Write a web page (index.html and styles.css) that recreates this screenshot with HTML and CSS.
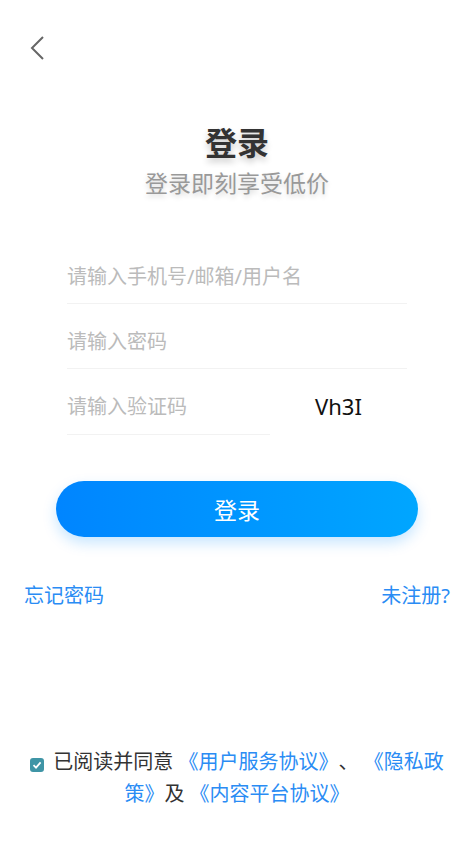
FILE: index.html
```html
<!DOCTYPE html>
<html lang="zh-CN">
<head>
    <meta charset="UTF-8">
    <meta name="viewport" content="width=device-width, initial-scale=1.0">
    <title>登录</title>
    <link rel="stylesheet" href="styles.css">
</head>
<body>

    <div class="page">
        <div class="top-bar">
            <svg class="back" width="16" height="26" viewBox="0 0 16 26">
                <polyline points="14,2 3,13 14,24" fill="none" stroke="#666" stroke-width="2"/>
            </svg>
        </div>

        <div class="heading">
            <h1>登录</h1>
            <p>登录即刻享受低价</p>
        </div>

        <div class="form">
            <div class="form-row">
                <input type="text" placeholder="请输入手机号/邮箱/用户名">
            </div>
            <div class="form-row">
                <input type="password" placeholder="请输入密码">
            </div>
            <div class="form-row captcha-row">
                <input type="text" placeholder="请输入验证码">
                <div class="captcha">Vh3I</div>
            </div>
        </div>

        <button class="login-btn">登录</button>

        <div class="links">
            <a href="#">忘记密码</a>
            <a href="#">未注册?</a>
        </div>

        <div class="agree">
            <span class="check">
                <svg width="10" height="10" viewBox="0 0 10 10">
                    <polyline points="1.5,5.2 4,7.6 8.6,2.4" fill="none" stroke="#fff" stroke-width="1.8"/>
                </svg>
            </span>已阅读并同意 <a href="#">《用户服务协议》</a>、 <a href="#">《隐私政策》</a>及 <a href="#">《内容平台协议》</a>
        </div>
    </div>

</body>
</html>
```

FILE: styles.css
```css
body {
    margin: 0;
    padding: 0;
    background: #fff;
    font-family: "Noto Sans", "Noto Sans CJK SC", sans-serif;
    text-spacing-trim: space-all;
}
.page {
    min-height: 100vh;
    display: flex;
    flex-direction: column;
}
.top-bar {
    height: 96px;
    padding: 35px 0 0 29px;
    box-sizing: border-box;
}
.back {
    display: block;
}
.heading {
    text-align: center;
    margin-top: 28px;
}
.heading h1 {
    margin: 0;
    font-size: 32px;
    line-height: 38px;
    font-weight: bold;
    color: #333;
    text-shadow: 0 4px 6px rgba(0, 0, 0, 0.2);
}
.heading p {
    margin: 6px 0 0;
    font-size: 23px;
    line-height: 30px;
    color: #999;
    text-shadow: 0 3px 5px rgba(0, 0, 0, 0.15);
}
.form {
    width: 340px;
    margin: 41px 0 0 67px;
}
.form-row {
    height: 65px;
    border-bottom: 1px solid #f2f2f2;
    box-sizing: border-box;
    padding-top: 10px;
    display: flex;
}
.form-row input {
    border: none;
    outline: none;
    padding: 0;
    width: 100%;
    height: 54px;
    font-size: 20px;
    font-family: inherit;
    color: #333;
    background: transparent;
}
.form-row input::placeholder {
    color: #bbb;
}
.captcha-row {
    border-bottom: none;
}
.captcha-row input {
    width: 203px;
    flex: none;
    height: 55px;
    border-bottom: 1px solid #f2f2f2;
}
.captcha {
    flex: 1;
    text-align: center;
    font-size: 22px;
    line-height: 54px;
    color: #111;
}
.login-btn {
    display: block;
    width: 362px;
    height: 56px;
    margin: 47px auto 0;
    border: none;
    border-radius: 28px;
    background: linear-gradient(90deg, #0085ff, #00a6ff);
    box-shadow: 0 6px 14px rgba(0, 140, 255, 0.22);
    color: #fff;
    font-size: 23px;
    font-family: inherit;
}
.links {
    display: flex;
    justify-content: space-between;
    padding: 0 24px;
    margin-top: 45px;
    font-size: 20px;
    line-height: 28px;
}
.links a, .agree a {
    color: #2a8cf4;
    text-decoration: none;
}
.agree {
    margin-top: auto;
    padding: 0 18px 39px;
    text-align: center;
    font-size: 20px;
    line-height: 32px;
    color: #333;
    word-break: break-all;
}
.check {
    display: inline-flex;
    align-items: center;
    justify-content: center;
    width: 14px;
    height: 14px;
    margin-right: 9px;
    border-radius: 3px;
    background: #3f95a6;
    vertical-align: -1px;
}
```
